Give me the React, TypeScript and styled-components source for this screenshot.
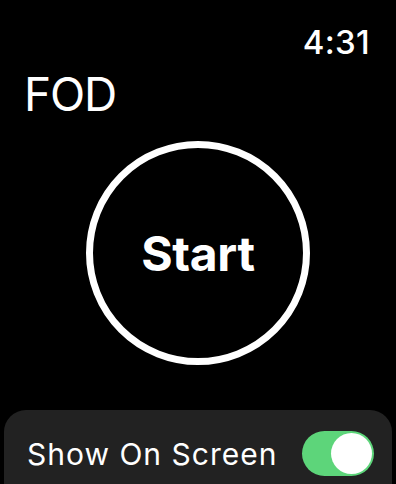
import React, { useState } from 'react'
import styled, { createGlobalStyle } from 'styled-components'

const GlobalStyle = createGlobalStyle`
  html, body {
    margin: 0;
    padding: 0;
    background: #000;
  }
  body {
    font-family: Inter, 'Noto Sans', sans-serif;
    color: #fff;
  }
`

const Screen = styled.div`
  width: 396px;
  height: 484px;
  overflow: hidden;
  background: #000;
  display: flex;
  flex-direction: column;

  & > * {
    flex-shrink: 0;
  }
`

const StatusBar = styled.div`
  height: 62px;
  display: flex;
  justify-content: flex-end;
  align-items: flex-end;
  padding: 0 26px 0 0;
`

const Time = styled.span`
  font-size: 33px;
  font-weight: 500;
  line-height: 40px;
  letter-spacing: 0.3px;
`

const Title = styled.h1`
  margin: 0;
  padding: 4px 0 0 24px;
  font-size: 46px;
  font-weight: 400;
  line-height: 56px;
  letter-spacing: -1.2px;
  height: 75px;
`

const StartArea = styled.div`
  display: flex;
  justify-content: center;
  height: 269px;
`

const StartButton = styled.button`
  width: 224px;
  height: 224px;
  border-radius: 50%;
  border: 7px solid #fff;
  background: transparent;
  color: #fff;
  font-family: Inter, 'Noto Sans', sans-serif;
  font-size: 48px;
  font-weight: 700;
  letter-spacing: -0.3px;
  box-sizing: border-box;
  padding: 0;
  cursor: pointer;
`

const Card = styled.div`
  margin: 0 4px;
  height: 100px;
  background: #222222;
  border-radius: 22px;
  display: flex;
  align-items: flex-start;
  justify-content: space-between;
  padding: 21px 18px 0 23px;
  box-sizing: border-box;
`

const Label = styled.span`
  font-size: 30px;
  font-weight: 400;
  line-height: 46px;
  letter-spacing: 1px;
`

const Switch = styled.button<{ $on: boolean }>`
  width: 72px;
  height: 45px;
  border-radius: 23px;
  border: none;
  padding: 2px;
  background: ${(p) => (p.$on ? '#5dd57a' : '#3a3a3c')};
  display: flex;
  justify-content: ${(p) => (p.$on ? 'flex-end' : 'flex-start')};
  align-items: center;
  box-sizing: border-box;
  cursor: pointer;
`

const Knob = styled.span`
  width: 41px;
  height: 41px;
  border-radius: 50%;
  background: #fff;
`

export default function App() {
  const [on, setOn] = useState(true)
  return (
    <>
      <GlobalStyle />
      <Screen>
        <StatusBar>
          <Time>4:31</Time>
        </StatusBar>
        <Title>FOD</Title>
        <StartArea>
          <StartButton>Start</StartButton>
        </StartArea>
        <Card>
          <Label>Show On Screen</Label>
          <Switch $on={on} onClick={() => setOn(!on)}>
            <Knob />
          </Switch>
        </Card>
      </Screen>
    </>
  )
}
